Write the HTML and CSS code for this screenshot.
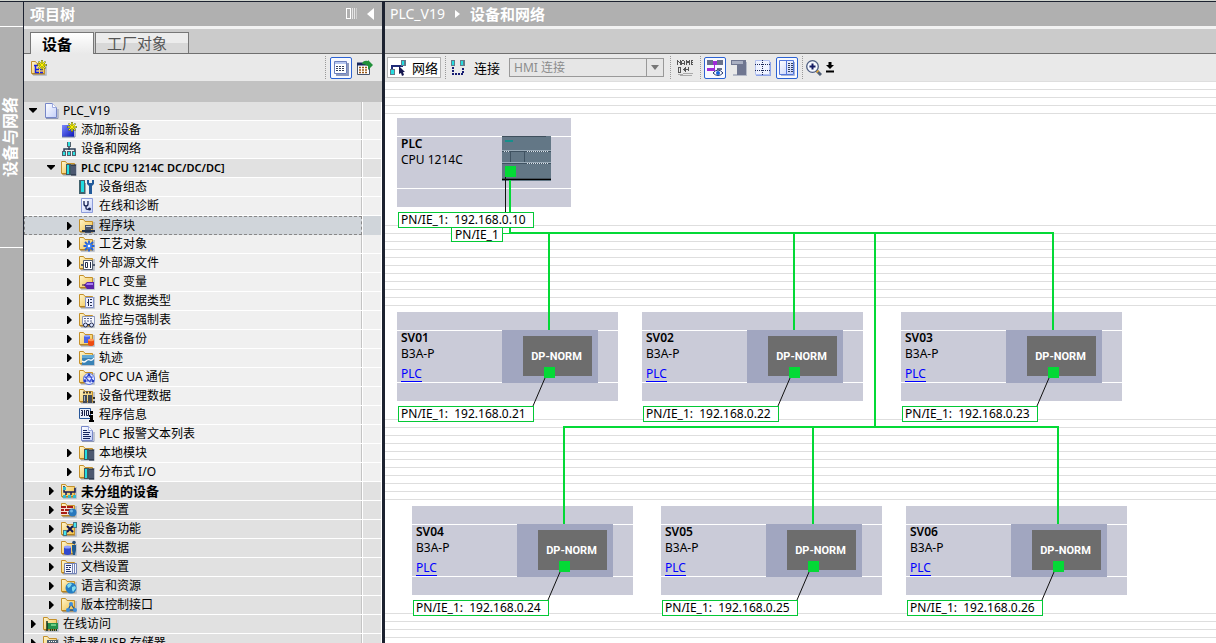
FILE: index.html
```html
<!DOCTYPE html>
<html lang="zh-CN">
<head>
<meta charset="utf-8">
<title>PLC_V19 - 设备和网络</title>
<link rel="stylesheet" href="styles.css">
</head>
<body>
<svg class="defs" width="0" height="0" aria-hidden="true">
  <defs>
    <linearGradient id="gold" x1="0" y1="0" x2="1" y2="1"><stop offset="0" stop-color="#fff6cf"/><stop offset="1" stop-color="#f0bf45"/></linearGradient>
    <linearGradient id="blue" x1="0" y1="0" x2="1" y2="1"><stop offset="0" stop-color="#7d8bff"/><stop offset="1" stop-color="#0a14b8"/></linearGradient>
    <linearGradient id="paper" x1="0" y1="0" x2="1" y2="1"><stop offset="0" stop-color="#ffffff"/><stop offset="1" stop-color="#c3cffa"/></linearGradient>
    <symbol id="right" viewBox="0 0 12 12"><path d="M4 2h1l4 4-4 4H4z" fill="#000"/></symbol>
    <symbol id="down" viewBox="0 0 12 12"><path d="M2 3h8v1L6 8 2 4z" fill="#000"/></symbol>
    <symbol id="folder" viewBox="0 0 16 16"><path d="M2 15h13V4" fill="none" stroke="#aeb6c4" stroke-width="1.5"/><path d="M.5 13.500V1.500H4.500L6 3.500H13.500V13.500z" fill="url(#gold)" stroke="#c4902a"/><path d="M1 14h13" stroke="#a87517"/></symbol>
    <symbol id="star" viewBox="0 0 10 10"><path d="M5 0v10M0 5h10M1.500 1.500l7 7M8.500 1.500l-7 7" stroke="#6a7a10" stroke-width="1.600"/><path d="M5 1v8M1 5h8M2 2l6 6M8 2L2 8" stroke="#fff200" stroke-width="1"/></symbol>
    <symbol id="page" viewBox="0 0 16 16"><path d="M3 15.500h12V6" fill="none" stroke="#8d97b5"/><path d="M2.500.5H9.500l4 4V14.500H2.500z" fill="url(#paper)" stroke="#7787c8"/><path d="M9.500.5v4h4" fill="#fff" stroke="#9eabe0"/></symbol>
    <symbol id="add" viewBox="0 0 16 16"><path d="M1 3h12v12H1z" fill="url(#blue)"/><path d="M1 15h13V6" fill="none" stroke="#6f7aa0"/><use href="#star" x="6" y="0" width="10" height="10"/></symbol>
    <symbol id="net" viewBox="0 0 16 16"><path d="M8 5v4M3 11V8h11v3" fill="none" stroke="#2a3c55" stroke-width="1.500"/><path d="M6 1h4v5H6zM1 10h4v5H1zM6 10h4v5H6zM11 10h4v5h-4z" fill="#50616e"/><path d="M7 1h2v4H7zM2 11h2v3H2zM7 11h2v3H7zM12 11h2v3h-2z" fill="#2fe0e0"/></symbol>
    <symbol id="modules" viewBox="0 0 16 16"><use href="#folder"/><path d="M5 4h5v11H5z" fill="#3d5864"/><path d="M6 5h2v9H6z" fill="#25dce0"/><path d="M10 5h5v10h-5z" fill="#4c5870"/><path d="M10 5h5M10 15h5" stroke="#1c2638"/></symbol>
    <symbol id="config" viewBox="0 0 16 16"><path d="M0 1h6v14H0z" fill="#41616c"/><path d="M2 2h3v11H2z" fill="#20dce2"/><path d="M8 1v4l2 2v8h3V7l2-2V1h-2v3h-3V1z" fill="#225b9b"/><path d="M6 4h1v11H6z" fill="#9aa5b0"/></symbol>
    <symbol id="diag" viewBox="0 0 16 16"><path d="M2.500.5h11v14h-11z" fill="url(#paper)" stroke="#8c9cdb"/><path d="M5 3v3q0 2 2 2t2-2V3M7 8v2q0 2 3 1" fill="none" stroke="#152052" stroke-width="1.300"/><circle cx="10.500" cy="11" r="1.500" fill="#152052"/></symbol>
    <symbol id="blocks" viewBox="0 0 16 16"><use href="#folder"/><path d="M6 7h8v4H6zM6 11h6v4H6z" fill="#46526b"/><path d="M7 8h5v1H7zM8 12h3v1H8z" fill="#c2cbd8"/><path d="M3 13h13" stroke="#26344d" stroke-width="2"/></symbol>
    <symbol id="tech" viewBox="0 0 16 16"><use href="#folder"/><path d="M10 4.500v11M4.500 10h11M6 6l8 8M14 6l-8 8" stroke="#2763d8" stroke-width="1.800"/><circle cx="10" cy="10" r="2.800" fill="#3f82f0"/><circle cx="10" cy="10" r="1.200" fill="#fff"/></symbol>
    <symbol id="source" viewBox="0 0 16 16"><use href="#folder"/><path d="M2 10h14" stroke="#535d70" stroke-width="2"/><path d="M4.500 5.500h9v9h-9z" fill="#fff" stroke="#535d70"/><path d="M6.500 7.500h2v5h-2zM11.500 7v6" fill="none" stroke="#222d48"/></symbol>
    <symbol id="tags" viewBox="0 0 16 16"><use href="#folder"/><path d="M5 11l3-3h7v7H8z" fill="#5a22a8"/><path d="M8 9h6v2H7z" fill="#a67cf0"/><path d="M3 11h3" stroke="#281050"/></symbol>
    <symbol id="types" viewBox="0 0 16 16"><use href="#folder"/><path d="M6.500 4.500h8v10h-8z" fill="#edf0ff" stroke="#8492c7"/><path d="M9.500 6.500v6M9 6.500h1M9 12.500h1M8 9.500h2M11 6.500h2M11 9.500h2M11 12.500h2" stroke="#20294d"/></symbol>
    <symbol id="watch" viewBox="0 0 16 16"><use href="#folder"/><path d="M3.500 4.500h12v8h-12z" fill="#f5f7ff" stroke="#8e99bd"/><path d="M5 6.500h9M5 9h9" stroke="#57638c" stroke-dasharray="2 1"/><circle cx="6.500" cy="13" r="2" fill="#dbe4ff" stroke="#20294d"/><circle cx="12.500" cy="13" r="2" fill="#dbe4ff" stroke="#20294d"/><path d="M8 12.500h3" stroke="#20294d"/></symbol>
    <symbol id="backup" viewBox="0 0 16 16"><use href="#folder"/><path d="M5 5h6v7H5z" fill="#4964e8"/><ellipse cx="8" cy="5" rx="3" ry="1" fill="#8da2ff"/><path d="M9 9h6v5q-3 2-6 0z" fill="#ed4b12"/><ellipse cx="12" cy="9" rx="3" ry="1.200" fill="#ff9655"/></symbol>
    <symbol id="trace" viewBox="0 0 16 16"><use href="#folder"/><path d="M3 5h12v10H3z" fill="#3a83b6"/><path d="M3 5h12v3H3z" fill="#63a9d4"/><path d="M3 11q2 2 4 0t4-1 4-2" stroke="#fff" stroke-width="1.300" fill="none"/></symbol>
    <symbol id="opc" viewBox="0 0 16 16"><use href="#folder"/><circle cx="10" cy="10" r="5.500" fill="#e9edff" stroke="#5974e4"/><path d="M10 5l4 7H5zM6 8h7l-2 5z" fill="none" stroke="#3d54d5" stroke-width="1.200"/><path d="M9 5h2v2H9zM5 11h2v2H5zM13 11h2v2h-2z" fill="#273fc0"/></symbol>
    <symbol id="proxy" viewBox="0 0 16 16"><use href="#folder"/><path d="M4 4.500h9" stroke="#46403b" stroke-width="2" stroke-dasharray="2 1"/><path d="M4 7h4v8H4zM9 7h4v8H9z" fill="#434b57"/><path d="M5 8h1v5H5z" fill="#a7b3c0"/><path d="M15 9v2M15 13v2" stroke="#333" stroke-width="2"/></symbol>
    <symbol id="info" viewBox="0 0 16 16"><path d="M.5 1.500h11v10H.5z" fill="#e8f0fb" stroke="#26569a"/><path d="M2 3.500h1.500v5H2M2 6h1.500M5.500 3v6M7.500 3.500h2v5h-2z" fill="none" stroke="#171e44"/><path d="M11 4h3v3h-3zM10 8h4v5h1v2h-5v-2h1v-3h-1z" fill="#000"/></symbol>
    <symbol id="list" viewBox="0 0 16 16"><use href="#page"/><path d="M4 4.500h4M4 6.500h7M4 8.500h6M4 10.500h8M4 12.500h7" stroke="#14235e"/></symbol>
    <symbol id="ungrouped" viewBox="0 0 16 16"><use href="#folder"/><path d="M3 3v6h11V5M5 9v3M10 9v3" fill="none" stroke="#171d5a" stroke-width="1.500"/><path d="M2 4h3v3H2zM2 12h3v3H2zM7 12h3v3H7zM12 12h3v3h-3z" fill="#35b9cc"/></symbol>
    <symbol id="security" viewBox="0 0 16 16"><use href="#folder"/><path d="M0 4h12v9H0z" fill="#f4ded3"/><path d="M0 5h5M6 5h6M0 8h3M4 8h6M0 11h6M7 11h4" stroke="#a81d16" stroke-width="2"/><circle cx="11.500" cy="10.500" r="4" fill="#2878bd"/><circle cx="10.500" cy="9" r="1.500" fill="#72b9e7"/></symbol>
    <symbol id="cross" viewBox="0 0 16 16"><use href="#folder"/><path d="M6 5l6 6M12 5l-6 6" stroke="#101451" stroke-width="2"/><path d="M2 9h4v6H2zM12 1h4v6h-4z" fill="#457883"/><path d="M3 10h2v4H3zM13 2h2v4h-2z" fill="#48e3ec"/></symbol>
    <symbol id="common" viewBox="0 0 16 16"><use href="#folder"/><path d="M3 7h7v7q-3 2-7 0z" fill="#3049ce"/><ellipse cx="6.500" cy="7" rx="3.500" ry="1.500" fill="#91a0ff"/><circle cx="13" cy="2.500" r="1.800" fill="#234b78"/><path d="M11 5h4v5l-1 5h-2l-1-5z" fill="#1e598f"/></symbol>
    <symbol id="docs" viewBox="0 0 16 16"><use href="#folder"/><path d="M3.500 4.500h12v10h-12z" fill="#f4f6ff" stroke="#7383b6"/><path d="M5 6.500h5M5 8.500h2M8 8.500h2M5 10.500h4M5 12.500h5" stroke="#27356b"/><path d="M11.500 5v9M13.500 5v9" stroke="#7383b6"/></symbol>
    <symbol id="globe" viewBox="0 0 16 16"><use href="#folder"/><circle cx="10" cy="10" r="5.500" fill="#247ec4"/><path d="M6 7l3-2 2 1-2 3-2 1zM11 9l3-1 1 2-3 4-1-2z" fill="#83dced"/></symbol>
    <symbol id="version" viewBox="0 0 16 16"><use href="#folder"/><path d="M10 7l-3 6h7z" fill="none" stroke="#205791" stroke-width="1.300"/><circle cx="10" cy="7" r="2" fill="#3b8ddd"/><circle cx="7" cy="13" r="2" fill="#3b8ddd"/><circle cx="14" cy="13" r="2" fill="#3b8ddd"/></symbol>
    <symbol id="online" viewBox="0 0 16 16"><use href="#folder"/><path d="M4 7h11v6H4z" fill="#26904b"/><path d="M4 5v10" stroke="#102f20" stroke-width="1.500"/><path d="M8 8h5v2H8z" fill="#6ccc82"/><path d="M7 14h7" stroke="#173f25" stroke-width="2" stroke-dasharray="1 1"/></symbol>
    <symbol id="reader" viewBox="0 0 16 16"><use href="#folder"/><path d="M4 5h11v10H4z" fill="#50606f"/><path d="M6 6.500h8" stroke="#fff" stroke-dasharray="1 1"/></symbol>
  </defs>
</svg>
<div class="app">
  <aside class="rail"><div class="rail-head"></div><div class="rail-tab"><span>设备与网络</span></div></aside>
  <section class="project">
    <header class="title">
      <h2>项目树</h2>
      <svg width="12" height="12" viewBox="0 0 12 12" shape-rendering="crispEdges"><path d="M.5.5h4v10h-4z" fill="none" stroke="#fff"/><path d="M6.500 0v11M8.500 0v11" stroke="#e6e6e6"/><path d="M10.500 0v11" stroke="#cfcfcf"/></svg>
      <svg width="8" height="12" viewBox="0 0 8 12"><path d="M7 0v12L0 6z" fill="#fff"/></svg>
    </header>
    <nav class="tabs"><button class="tab active">设备</button><button class="tab">工厂对象</button></nav>
    <div class="toolbar tree-tools">
      <button class="tool" aria-label="新建"><svg class="ico" viewBox="0 0 16 16"><use href="#folder"/><path d="M3 5.500h4M4.500 6v6.500h3.500M5 9.500h3M9 9.500h3M9 12.500h3" fill="none" stroke="#1420e8" stroke-width="1.500"/><use href="#star" x="6" y="0" width="10" height="10"/></svg></button>
      <i class="sep push"></i>
      <button class="tool on" aria-label="详细视图"><svg class="ico" viewBox="0 0 16 16"><path d="M3 15h12V3" fill="none" stroke="#8e99bb" stroke-width="2"/><path d="M1.500 1.500h12v12h-12z" fill="#fff" stroke="#6c80bd"/><path d="M2 3h11" stroke="#b7c7ef" stroke-width="2"/><path d="M3 6.500h9M3 8.500h9M3 10.500h9" stroke="#39425c" stroke-dasharray="2 1"/></svg></button>
      <button class="tool" aria-label="导出"><svg class="ico" viewBox="0 0 16 16"><path d="M.5 3.500h12v11H.5z" fill="#fff" stroke="#46536c"/><path d="M0 4h12" stroke="#17275b" stroke-width="3"/><path d="M2 7.500h9M2 10h9M2 12.500h9" stroke="#9a5a18" stroke-width="1.500" stroke-dasharray="2 1"/><path d="M5 4q1-4 6-3V0l5 5-5 5V6q-3-2-6-2z" fill="#21913a"/></svg></button>
    </div>
    <div class="tree-head"></div>
    <ul class="tree">
      <li class="row group l0"><span class="cell"><svg class="arrow"><use href="#down"/></svg><svg class="ico"><use href="#page"/></svg>PLC_V19</span></li>
      <li class="row l1"><span class="cell"><i class="arrow"></i><svg class="ico"><use href="#add"/></svg>添加新设备</span></li>
      <li class="row l1"><span class="cell"><i class="arrow"></i><svg class="ico"><use href="#net"/></svg>设备和网络</span></li>
      <li class="row group l1 semi"><span class="cell"><svg class="arrow"><use href="#down"/></svg><svg class="ico"><use href="#modules"/></svg>PLC [CPU 1214C DC/DC/DC]</span></li>
      <li class="row l2"><span class="cell"><i class="arrow"></i><svg class="ico"><use href="#config"/></svg>设备组态</span></li>
      <li class="row l2"><span class="cell"><i class="arrow"></i><svg class="ico"><use href="#diag"/></svg>在线和诊断</span></li>
      <li class="row l2 selected"><span class="cell"><svg class="arrow"><use href="#right"/></svg><svg class="ico"><use href="#blocks"/></svg>程序块</span></li>
      <li class="row l2"><span class="cell"><svg class="arrow"><use href="#right"/></svg><svg class="ico"><use href="#tech"/></svg>工艺对象</span></li>
      <li class="row l2"><span class="cell"><svg class="arrow"><use href="#right"/></svg><svg class="ico"><use href="#source"/></svg>外部源文件</span></li>
      <li class="row l2"><span class="cell"><svg class="arrow"><use href="#right"/></svg><svg class="ico"><use href="#tags"/></svg>PLC 变量</span></li>
      <li class="row l2"><span class="cell"><svg class="arrow"><use href="#right"/></svg><svg class="ico"><use href="#types"/></svg>PLC 数据类型</span></li>
      <li class="row l2"><span class="cell"><svg class="arrow"><use href="#right"/></svg><svg class="ico"><use href="#watch"/></svg>监控与强制表</span></li>
      <li class="row l2"><span class="cell"><svg class="arrow"><use href="#right"/></svg><svg class="ico"><use href="#backup"/></svg>在线备份</span></li>
      <li class="row l2"><span class="cell"><svg class="arrow"><use href="#right"/></svg><svg class="ico"><use href="#trace"/></svg>轨迹</span></li>
      <li class="row l2"><span class="cell"><svg class="arrow"><use href="#right"/></svg><svg class="ico"><use href="#opc"/></svg>OPC UA 通信</span></li>
      <li class="row l2"><span class="cell"><svg class="arrow"><use href="#right"/></svg><svg class="ico"><use href="#proxy"/></svg>设备代理数据</span></li>
      <li class="row l2"><span class="cell"><i class="arrow"></i><svg class="ico"><use href="#info"/></svg>程序信息</span></li>
      <li class="row l2"><span class="cell"><i class="arrow"></i><svg class="ico"><use href="#list"/></svg>PLC 报警文本列表</span></li>
      <li class="row l2"><span class="cell"><svg class="arrow"><use href="#right"/></svg><svg class="ico"><use href="#modules"/></svg>本地模块</span></li>
      <li class="row l2"><span class="cell"><svg class="arrow"><use href="#right"/></svg><svg class="ico"><use href="#modules"/></svg>分布式 I/O</span></li>
      <li class="row group l1 bold"><span class="cell"><svg class="arrow"><use href="#right"/></svg><svg class="ico"><use href="#ungrouped"/></svg>未分组的设备</span></li>
      <li class="row group l1"><span class="cell"><svg class="arrow"><use href="#right"/></svg><svg class="ico"><use href="#security"/></svg>安全设置</span></li>
      <li class="row group l1"><span class="cell"><svg class="arrow"><use href="#right"/></svg><svg class="ico"><use href="#cross"/></svg>跨设备功能</span></li>
      <li class="row group l1"><span class="cell"><svg class="arrow"><use href="#right"/></svg><svg class="ico"><use href="#common"/></svg>公共数据</span></li>
      <li class="row group l1"><span class="cell"><svg class="arrow"><use href="#right"/></svg><svg class="ico"><use href="#docs"/></svg>文档设置</span></li>
      <li class="row group l1"><span class="cell"><svg class="arrow"><use href="#right"/></svg><svg class="ico"><use href="#globe"/></svg>语言和资源</span></li>
      <li class="row group l1"><span class="cell"><svg class="arrow"><use href="#right"/></svg><svg class="ico"><use href="#version"/></svg>版本控制接口</span></li>
      <li class="row group l0"><span class="cell"><svg class="arrow"><use href="#right"/></svg><svg class="ico"><use href="#online"/></svg>在线访问</span></li>
      <li class="row group l0"><span class="cell"><svg class="arrow"><use href="#right"/></svg><svg class="ico"><use href="#reader"/></svg>读卡器/USB 存储器</span></li>
    </ul>
  </section>
  <main class="work">
    <header class="title crumbs"><span>PLC_V19</span><svg width="5" height="8" viewBox="0 0 5 8"><path d="M0 0l5 4-5 4z" fill="#fff"/></svg><strong>设备和网络</strong></header>
    <div class="tabs"></div>
    <div class="toolbar net-tools">
      <button class="mode"><svg class="ico" viewBox="0 0 16 16"><path d="M2 10V6h10V5" fill="none" stroke="#202b78" stroke-width="2"/><path d="M0 9h5v6H0zM11 0h5v6h-5z" fill="#617b89"/><path d="M1 10h3v4H1zM12 1h2v4h-2z" fill="#25dce0"/><path d="M9 6l6 6h-2l1 3-2 1-1-3-2 1z" fill="#15174e"/></svg>网络</button>
      <i class="sep"></i>
      <button class="plain"><svg class="ico" viewBox="0 0 16 16"><path d="M3 7v7h10V7" fill="none" stroke="#171d72" stroke-width="2" stroke-dasharray="2 1"/><path d="M1 0h4v6H1zM10 0h5v6h-5z" fill="#617b89"/><path d="M2 1h2v4H2zM11 1h2v4h-2z" fill="#25dce0"/></svg>连接</button>
      <div class="combo"><select aria-label="连接类型" disabled><option>HMI 连接</option></select><svg width="8" height="5" viewBox="0 0 8 5"><path d="M0 0h8L4 5z" fill="#777"/></svg></div>
      <i class="sep"></i>
      <button class="tool" aria-label="显示名称"><svg class="ico" viewBox="0 0 16 16" shape-rendering="crispEdges"><g fill="#555"><path d="M0 0h1v5H0zM1 1h1v1H1zM2 2h1v1H2zM3 0h1v5H3zM5 0h2v1H5zM4 1h1v4H4zM7 1h1v4H7zM5 3h2v1H5zM9 0h1v5H9zM10 1h1v2h-1zM11 1h1v2h-1zM12 0h1v5h-1zM14 0h1v5h-1zM15 0h1v1h-1zM15 2h1v1h-1zM15 4h1v1h-1z"/><path d="M1 7h3v1H1zM1 8h1v5H1zM3 8h1v5H3zM1 12h3v1H1zM11 7h1v4h-1zM6 9h6v1H6zM7 8h1v3H7zM8 7h1v5H8z"/></g><path d="M1 14h5v1H1zM6 13h10v1H6zM3 15h12v1H3z" fill="#aaa"/></svg></button>
      <i class="sep"></i>
      <button class="tool on" aria-label="显示地址"><svg class="ico" viewBox="0 0 16 16"><path d="M0 0h6v5H0zM10 0h6v5h-6zM10 8h5v2h-5z" fill="#69718b"/><path d="M6 1h4v4H6zM0 8h8v3H0zM7 5h1v7H7z" fill="#a12bd7"/><path d="M6 13q5-6 10 0-5 5-10 0z" fill="#fff" stroke="#203770"/><circle cx="11" cy="13" r="2" fill="#1762dc"/></svg></button>
      <button class="tool" aria-label="布局"><svg class="ico" viewBox="0 0 16 16"><path d="M2 15h14V2" fill="none" stroke="#b5bac7" stroke-width="2"/><path d="M0 0h15v15H6V5H0z" fill="#6f7690"/><path d="M1 1h11v3H1z" fill="#aab0c2"/></svg></button>
      <button class="tool" aria-label="分页"><svg class="ico" viewBox="0 0 16 16"><path d="M1 15h14V2" fill="none" stroke="#8da3e8" stroke-width="2"/><path d="M.5.5h14v14H.5z" fill="#eef2ff" stroke="#b3c1ef"/><path d="M7.500 0v15M0 4.500h15M0 10.500h15" stroke="#1c2858" stroke-dasharray="1 1"/></svg></button>
      <button class="tool on" aria-label="表格视图"><svg class="ico" viewBox="0 0 16 16"><path d="M2 15.500h13.500V2" fill="none" stroke="#a7b4da"/><path d="M.5.500h14v14h-14z" fill="url(#paper)" stroke="#5578db"/><path d="M7.500 1v13" stroke="#5578db"/><path d="M9 3.500h5M9 5.500h5M9 7.500h5M9 9.500h5M9 11.500h5" stroke="#33415d" stroke-dasharray="2 1"/></svg></button>
      <i class="sep"></i>
      <button class="zoom" aria-label="缩放"><svg class="ico" viewBox="0 0 16 16"><path d="M10 10l5 5" stroke="#526077" stroke-width="3"/><path d="M10 10l2 2" stroke="#edaf36" stroke-width="3"/><circle cx="6.500" cy="6.500" r="5.800" fill="#f6f9ff" stroke="#4b5b80" stroke-width="1.300"/><path d="M6.500 3.500v6M3.500 6.500h6" stroke="#141a62" stroke-width="2"/></svg><svg width="8" height="11" viewBox="0 0 8 11"><path d="M2.500 0h3v3H8L4 7 0 3h2.500zM0 8.500h8v2H0z" fill="#000"/></svg></button>
    </div>
    <div class="canvas">
      <div class="rules first"></div><div class="rules"></div><div class="rules"></div><div class="rules last"></div>

      <article class="node plc" id="plc"><div class="text"><b>PLC</b><span>CPU 1214C</span></div>
        <svg class="cpu" width="49" height="45" viewBox="0 0 49 45" shape-rendering="crispEdges"><path d="M0 0h49v45H0z" fill="#637786"/><path d="M0 0h44v1H0z" fill="#3e4f5c"/><path d="M3 4h8v2H3z" fill="#16908c"/><path d="M0 14h49v1H0zM0 26h49v1H0z" fill="#9aabb8"/><path d="M0 15h49v1H0zM0 27h49v1H0zM8 16h1v10H8zM22 16h1v10h-1z" fill="#3f5261"/><path d="M2 15.500h6M25 15.500h22M25 27.500h22" stroke="#d8dfe6" stroke-dasharray="1 1"/><path d="M0 43h49v1H0z" fill="#000"/><path d="M0 42h49v1H0z" fill="#46535e"/></svg>
        <i class="port"></i><span class="addr">PN/IE_1:&nbsp; 192.168.0.10</span><span class="addr subnet">PN/IE_1</span></article>
      <article class="node slave sv1"><div class="text"><b>SV01</b><span>B3A-P</span><a href="#plc">PLC</a></div><div class="module"><b>DP-NORM</b></div><i class="port"></i><span class="addr">PN/IE_1:&nbsp; 192.168.0.21</span></article>
      <article class="node slave sv2"><div class="text"><b>SV02</b><span>B3A-P</span><a href="#plc">PLC</a></div><div class="module"><b>DP-NORM</b></div><i class="port"></i><span class="addr">PN/IE_1:&nbsp; 192.168.0.22</span></article>
      <article class="node slave sv3"><div class="text"><b>SV03</b><span>B3A-P</span><a href="#plc">PLC</a></div><div class="module"><b>DP-NORM</b></div><i class="port"></i><span class="addr">PN/IE_1:&nbsp; 192.168.0.23</span></article>
      <article class="node slave sv4"><div class="text"><b>SV04</b><span>B3A-P</span><a href="#plc">PLC</a></div><div class="module"><b>DP-NORM</b></div><i class="port"></i><span class="addr">PN/IE_1:&nbsp; 192.168.0.24</span></article>
      <article class="node slave sv5"><div class="text"><b>SV05</b><span>B3A-P</span><a href="#plc">PLC</a></div><div class="module"><b>DP-NORM</b></div><i class="port"></i><span class="addr">PN/IE_1:&nbsp; 192.168.0.25</span></article>
      <article class="node slave sv6"><div class="text"><b>SV06</b><span>B3A-P</span><a href="#plc">PLC</a></div><div class="module"><b>DP-NORM</b></div><i class="port"></i><span class="addr">PN/IE_1:&nbsp; 192.168.0.26</span></article>
      <svg class="wires" aria-hidden="true">
        <g fill="none" stroke="#04d936" stroke-width="2"><path d="M125 99V152H668V249M164 152V249M409 152V249M490 152V346M179 443V346H673V443M428 346V443"/><path d="M117 152.500h8" stroke-width="1"/></g>
        <path d="M120.500 96V132M160 297l-12 28M405 297l-12 28M664 297l-12 28M175 491l-12 28M424 491l-12 28M669 491l-12 28" fill="none" stroke="#111"/>
      </svg>
    </div>
  </main>
</div>
</body>
</html>
```
FILE: styles.css
```css
*, *::after { box-sizing: border-box; }
body { margin: 0; overflow: hidden; font: 12px/18px "Noto Sans", "Noto Sans CJK SC", sans-serif; color: #000; }
button, select { margin: 0; font: inherit; color: inherit; }
i { font-style: normal; }
.defs { position: absolute; }
.app { display: flex; height: 100vh; border-top: 1px solid #d0d4ce; background: #1c2230; padding-top: 1px; }
.ico { width: 16px; height: 16px; flex: none; }

.rail { width: 23px; margin-right: 1px; flex: none; display: flex; flex-direction: column; background: #b0b0b0; }
.rail-head { height: 25px; border-bottom: 1px solid #fff; }
.rail-tab { height: 221px; border-bottom: 1px solid #fff; display: flex; align-items: center; justify-content: center; }
.rail-tab span { writing-mode: vertical-rl; text-orientation: sideways; transform: rotate(180deg); padding-left: 3px; font-size: 16px; line-height: 20px; font-weight: 700; color: #fff; }

.project { width: 358px; flex: none; display: flex; flex-direction: column; overflow: hidden; background: #f0f0f0; }
.title { height: 27px; flex: none; display: flex; align-items: center; gap: 9px; padding: 0 7px 0 6px; background: #b0b0b0; border-bottom: 3px solid #f2f2f2; color: #fff; }
.title h2 { margin: 0 auto 0 0; font-size: 15px; line-height: 22px; font-weight: 700; }
.tabs { height: 25px; flex: none; display: flex; align-items: flex-end; gap: 1px; padding-left: 6px; background: #cbcbcb; border-bottom: 1px solid #6f6f6f; }
.tab { height: 21px; padding: 0 21px 0 11px; border: 1px solid #777; border-bottom: 0; background: linear-gradient(#ececec 50%, #d8d8d8 50%); font-size: 15px; line-height: 18px; color: #555; }
.tab.active { height: 22px; margin-bottom: -1px; background: linear-gradient(#fff, #e9e9e9); font-weight: 700; color: #000; }
.toolbar { height: 27px; flex: none; display: flex; align-items: center; background: #e9e9e9; }
.toolbar button { display: flex; align-items: center; justify-content: center; flex: none; padding: 0; border: 0; background: none; }
.toolbar .tool { width: 22px; height: 22px; border: 1px solid transparent; border-radius: 2px; }
.toolbar .on { border-color: #2b62d2; background: #f7f9ff; }
.sep { width: 1px; height: 23px; flex: none; background: repeating-linear-gradient(#999 0 1px, transparent 1px 2px); }
.tree-tools { gap: 2px; padding: 0 6px 0 4px; }
.tree-tools .push { margin: 0 2px 0 auto; }
.tree-head { height: 21px; flex: none; background: #c2c2c2; }
.tree { margin: 0; padding: 0; list-style: none; }
.row { display: flex; height: 19px; background: #f0f0f0; border-bottom: 1px solid #fff; }
.row::after { content: ""; width: 20px; border-left: 1px solid #fff; border-right: 1px solid #fff; }
.row.group { background: #e1e1e1; }
.cell { flex: 1; display: flex; align-items: center; gap: 4px; border-right: 1px solid #c4c4c4; white-space: nowrap; }
.arrow { width: 12px; height: 12px; flex: none; }
.l0 .cell { padding-left: 3px; }
.l1 .cell { padding-left: 21px; }
.l2 .cell { padding-left: 39px; }
.row.selected { background: #d0d5da; border-bottom: 0; }
.selected .cell { border: 1px dashed #888; padding-left: 38px; }
.semi { font-size: 11px; font-weight: 600; }
.bold { font-size: 13px; font-weight: 700; }

.work { flex: 1; min-width: 0; margin-left: 3px; display: flex; flex-direction: column; }
.crumbs { gap: 10px; padding-left: 5px; font-size: 14px; }
.crumbs strong { font-size: 15px; }
.net-tools { font-size: 13px; }
.net-tools .sep { margin: 0 3px 0 4px; }
.toolbar .mode { gap: 6px; height: 21px; width: 54px; margin-left: 2px; border: 1px solid #b4b4b4; background: #fff; }
.toolbar .plain { gap: 8px; margin-left: 1px; }
.combo { display: grid; width: 155px; height: 19px; margin: 0 2px 0 9px; border: 1px solid #999; align-items: center; }
.combo select { grid-area: 1 / 1; width: 100%; height: 17px; padding: 0 4px; appearance: none; border: 0; border-radius: 0; background: linear-gradient(#999, #999) right 16px top / 1px 100% no-repeat, #e6e6e6; font-size: 12px; line-height: 17px; color: #8c8c8c; opacity: 1; }
.combo svg { grid-area: 1 / 1; justify-self: end; margin-right: 4px; }
.net-tools .tool + .tool { margin-left: 2px; }
.toolbar .zoom { gap: 4px; }

.canvas { position: relative; flex: 1; overflow: hidden; background: #fff; }
.rules { height: 81px; margin-bottom: 113px; background: repeating-linear-gradient(#dedede 0 1px, #fff 1px 8px); }
.rules.first { height: 33px; margin-bottom: 111px; }
.rules.last { height: 30px; margin: 0; }
.node { position: absolute; width: 221px; height: 89px; background: linear-gradient(#cacbd8 18px, #fff 18px 19px, #cacbd8 19px 70px, #fff 70px 71px, #cacbd8 71px); }
.plc { left: 12px; top: 37px; width: 174px; }
.sv1 { left: 12px; top: 231px; }
.sv2 { left: 257px; top: 231px; }
.sv3 { left: 516px; top: 231px; }
.sv4 { left: 27px; top: 425px; }
.sv5 { left: 276px; top: 425px; }
.sv6 { left: 521px; top: 425px; }
.text { display: flex; flex-direction: column; align-items: flex-start; padding: 18px 0 0 4px; line-height: 16px; }
.text b { font-weight: 600; }
.text a { margin-top: 4px; height: 16px; line-height: 15px; color: #00f; text-decoration: none; border-bottom: 1px solid #00f; }
.module { position: absolute; left: 105px; top: 18px; width: 96px; height: 53px; padding: 6px 6px 7px 21px; background: #a1a6c0; }
.module b { display: block; height: 40px; padding-right: 2px; background: #6d6d6d; color: #fff; text-align: center; font: 700 11px/41px Roboto, sans-serif; }
.cpu { position: absolute; left: 105px; top: 18px; }
.port { position: absolute; left: 147px; top: 55px; width: 11px; height: 11px; background: #04d936; z-index: 2; }
.plc .port { left: 108px; top: 48px; }
.addr { position: absolute; left: 1px; top: 94px; width: 136px; height: 16px; padding-left: 2px; border: 1px solid #04c936; background: #fff; line-height: 14px; white-space: nowrap; z-index: 3; }
.addr.subnet { left: 54px; top: 109px; width: 52px; height: 15px; padding-left: 3px; line-height: 13px; z-index: 2; }
.wires { position: absolute; inset: 0; width: 100%; height: 100%; z-index: 1; pointer-events: none; }
```
